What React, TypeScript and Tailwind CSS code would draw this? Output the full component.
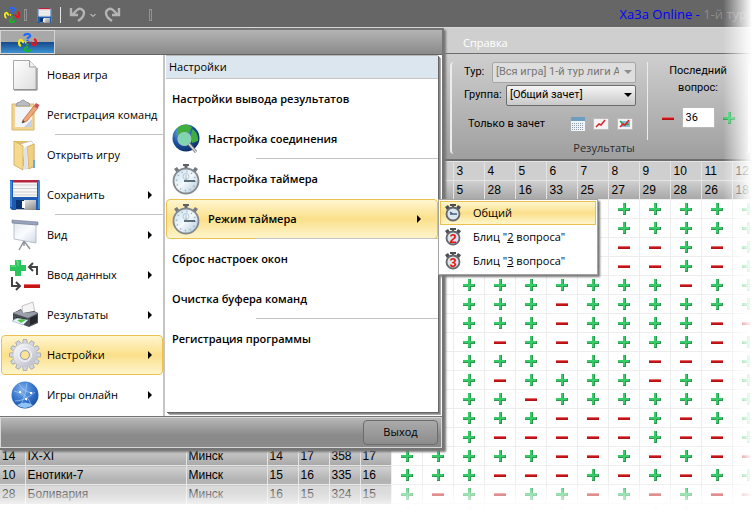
import type { ReactNode } from 'react';

interface MenuEntry {
  label: string;
  icon?: ReactNode;
  arrow?: boolean;
  active?: boolean;
  line?: boolean;
}

interface TeamRow {
  info?: string[];
  marks: string;
}

const ROWS: TeamRow[] = [
  { marks: '++++++++++++' },
  { marks: '++++++++++++' },
  { marks: '+++++++--+-+' },
  { marks: '+++++++--+-+' },
  { marks: '+++++++++-++' },
  { marks: '+++++-++++++' },
  { marks: '+++++-++++--' },
  { marks: '+++-+-++++-+' },
  { marks: '+++++-++---+' },
  { marks: '+++-++++-+-+' },
  { marks: '++++-+++++++' },
  { marks: '+++++---+-++' },
  { marks: '+++-----+--+' },
  { info: ['14', 'IX-XI', 'Минск', '14', '17', '358', '17'], marks: '+++++--+-+--' },
  { info: ['10', 'Енотики-7', 'Минск', '15', '16', '335', '16'], marks: '+++---+-+-++' },
  { info: ['28', 'Боливария', 'Минск', '16', '15', '324', '15'], marks: '+-+-++-+-+--' },
  { marks: '+-+-++--++-+' },
];

const HEADERS = [
  ['1', '2', '3', '4', '5', '6', '7', '8', '9', '10', '11', '12'],
  ['2', '3', '5', '28', '16', '33', '25', '27', '29', '28', '26', '18'],
];

function LogoIcon({ size }: { size: number }) {
  return (
    <svg width={size} height={size} viewBox="0 0 20 20" fill="none" strokeWidth="2.3" className="shrink-0">
      <path d="M6.600 3.200C6.800.4 12.800.4 12.900 3C12.900 4.800 10.200 4.200 10.100 6.200M10.100 7.200v1.600" stroke="#1f6bff" />
      <path d="M16.800 6.600C19.600 6.800 19.600 12.800 17 12.900C15.200 12.900 15.800 10.200 13.800 10.100M12.800 10.100h-1.600" stroke="#ee1111" />
      <path d="M13.400 16.800C13.200 19.600 7.200 19.600 7.100 17C7.100 15.200 9.800 15.800 9.900 13.800M9.900 12.800v-1.600" stroke="#18b52a" />
      <path d="M3.200 13.400C.4 13.200.4 7.200 3 7.100C4.800 7.100 4.200 9.800 6.200 9.900M7.200 9.900h1.600" stroke="#f5ea14" />
    </svg>
  );
}

function Floppy({ size }: { size: number }) {
  return (
    <svg width={size} height={size} viewBox="0 0 30 30" className="shrink-0">
      <defs>
        <linearGradient id="shutter" x1="0" x2="1" y1="0" y2="1">
          <stop offset="0" stopColor="#fff" />
          <stop offset="1" stopColor="#888" />
        </linearGradient>
      </defs>
      <path d="M0 0h29l1 1v29H2l-2-2z" fill="#1d5cb0" />
      <path d="M0 1h2v26H0zM28 1h2v28h-2z" fill="#3c8ae0" />
      <path d="M3 0h24v17H3z" fill="#f6f6f6" />
      <path d="M3 0h24v2.500H3z" fill="#b8243c" />
      <path d="M3 5h24M3 8.500h24M3 12h24M3 15h24" stroke="#cfcfcf" />
      <path d="M6 20h20v10H6z" fill="url(#shutter)" />
      <path d="M6 20h8v9H6z" fill="#0c3474" />
      <path d="M12 21h3v7h-3z" fill="#fff" />
    </svg>
  );
}

function PageIcon() {
  return (
    <svg width="26" height="32" viewBox="0 0 26 32">
      <defs>
        <linearGradient id="page" x1="0" x2="1" y1="0" y2="1">
          <stop offset="0" stopColor="#fff" />
          <stop offset="1" stopColor="#dedede" />
        </linearGradient>
      </defs>
      <path d="M1.500 1.500h16l6.500 6.500v22.500H1.500z" fill="url(#page)" stroke="#a9a9a9" />
      <path d="M17.500 1.500v6.500H24" fill="#eee" stroke="#a0a0a0" />
      <path d="M2 31h23V9" fill="none" stroke="#777" />
    </svg>
  );
}

function ClipboardIcon() {
  return (
    <svg width="30" height="32" viewBox="0 0 30 32">
      <path d="M2 5h22v26H2z" fill="#f0d592" stroke="#d9b56c" />
      <path d="M5 8h17v20H5z" fill="#f2f6fb" />
      <path d="M22 20v8h-8z" fill="#c4d2e4" />
      <path d="M6 7q0-4 4-4q3-4 6 0q4 0 4 4z" fill="#b9bdc2" stroke="#9a9ea4" />
      <path d="M13 21L24 7l3.500 2.500L17 22l-5 2z" fill="#f0a878" stroke="#b86c44" strokeWidth=".8" />
      <path d="M24 7l2-3 3.500 2-2 3.500z" fill="#c8545c" />
      <path d="M12 24l1-3 2 2z" fill="#444" />
    </svg>
  );
}

function FoldersIcon() {
  return (
    <svg width="26" height="32" viewBox="0 0 26 32">
      <path d="M3 2h14v25H3z" fill="#e5bd62" />
      <path d="M8 5l11-3 3 3v23l-8 2z" fill="#fff" stroke="#b5b5b5" strokeWidth=".7" />
      <path d="M2 2l9 5v24l-9-5z" fill="#f5da8e" stroke="#d6b469" />
      <path d="M15 8l7-3v22l-5 3z" fill="#f0cf7e" stroke="#d6b469" />
      <path d="M12 9l3-2 1 22-4 2z" fill="#dfe3e8" />
      <path d="M21 21h2v8h-2z" fill="#68a8e8" />
    </svg>
  );
}

function BoardIcon() {
  return (
    <svg width="30" height="32" viewBox="0 0 30 32">
      <defs>
        <linearGradient id="board" x1="0" x2="1" y1="0" y2="1">
          <stop offset="0" stopColor="#e4e9ee" />
          <stop offset=".5" stopColor="#fafcff" />
          <stop offset="1" stopColor="#cfd9e3" />
        </linearGradient>
      </defs>
      <path d="M14 22l-5 9M14 22l6 8M14 20v7" stroke="#8d929b" strokeWidth="1.400" />
      <path d="M4 4l22 2v18L4 20z" fill="url(#board)" stroke="#aab3bd" strokeWidth=".8" />
      <path d="M2 1l26 2v3L2 4z" fill="#99a4bb" stroke="#707c98" strokeWidth=".6" />
    </svg>
  );
}

function InputIcon() {
  return (
    <svg width="32" height="32" viewBox="0 0 32 32" fill="none">
      <path d="M6 1h6v5h5v6h-5v5H6v-5H1V6h5z" fill="#2cc45c" />
      <path d="M7 2h2v5M2 7h5" stroke="#7be49a" />
      <path d="M28 16V8h-7M24 4l-4 4 4 4" stroke="#444" strokeWidth="2" />
      <path d="M3 18v9h8M7 23l4 4-4 4" stroke="#444" strokeWidth="2" />
      <path d="M15 25h16v4H15z" fill="#c41414" />
      <path d="M15 25.500h16" stroke="#ee6a6a" />
    </svg>
  );
}

function PrinterIcon() {
  return (
    <svg width="28" height="28" viewBox="0 0 28 28">
      <path d="M11 5l11-4 2 11-12 3z" fill="#f5f5f5" stroke="#b4b4b4" strokeWidth=".8" />
      <path d="M2 12l8-4 2 4 11-2 4 2v10l-9 4L2 20z" fill="#4a4f57" />
      <path d="M2 12l8-3 2 3 11-1 4 1-10 5z" fill="#9aa0aa" />
      <path d="M5 16l11 2v3L5 19z" fill="#111" />
      <path d="M1 20l5-3 11 2-5 5z" fill="#e6f4fa" stroke="#8cabba" strokeWidth=".5" />
      <path d="M6 19l6-1 3 1-5 3z" fill="#56c450" />
      <path d="M19 17l7-3v7l-7 3z" fill="#24272c" />
    </svg>
  );
}

const TEETH = [0, 30, 60, 90, 120, 150, 180, 210, 240, 270, 300, 330];

function GearIcon() {
  return (
    <svg width="32" height="34" viewBox="-16 -17 32 34">
      <defs>
        <linearGradient id="gear" x1="0" x2="1" y1="0" y2="1">
          <stop offset="0" stopColor="#fff" />
          <stop offset="1" stopColor="#b4b8c6" />
        </linearGradient>
      </defs>
      {TEETH.map((angle) => (
        <path key={angle} d="M-2.500-11L-1.800-15.500H1.800L2.500-11z" fill="#d2d5de" stroke="#8c92a4" strokeWidth=".6" transform={`rotate(${angle})`} />
      ))}
      <circle r="12" fill="url(#gear)" stroke="#c4c8d2" strokeWidth=".7" />
      <circle r="6.500" fill="#dfe2ea" stroke="#f3f5fa" />
      <circle r="4.500" fill="#fae394" stroke="#969cae" />
    </svg>
  );
}

function GlobeIcon() {
  return (
    <svg width="28" height="28" viewBox="0 0 28 28" fill="none">
      <defs>
        <radialGradient id="globe" cx=".4" cy=".3" r=".8">
          <stop offset="0" stopColor="#7fb2ee" />
          <stop offset=".6" stopColor="#2c6cc6" />
          <stop offset="1" stopColor="#1a4494" />
        </radialGradient>
      </defs>
      <circle cx="14" cy="14" r="13.500" fill="url(#globe)" />
      <path d="M3 10q9 2 13 10M8 3q4 8 14 9M4 20q10 0 20-9M16 2q-1 12-6 22M20 24q-2-8-12-14" stroke="#a9cdf7" strokeWidth=".7" />
      <path d="M6 24q8 6 16 0q-8-5-16 0z" fill="#8fc4f4" />
      <path d="M8 10h2v2H8zM19 11h2v2h-2zM14 17h2v2h-2z" fill="#fff" />
    </svg>
  );
}

function EarthSearchIcon() {
  return (
    <svg width="28" height="32" viewBox="0 0 28 32">
      <defs>
        <radialGradient id="earth" cx=".35" cy=".3" r=".8">
          <stop offset="0" stopColor="#7fbcf0" />
          <stop offset=".5" stopColor="#1c56a8" />
          <stop offset="1" stopColor="#082458" />
        </radialGradient>
      </defs>
      <circle cx="14" cy="15" r="13.500" fill="url(#earth)" />
      <path d="M6 4q8-5 14 0l-3 6-5-1-2 5-5-2zM20 6q7 4 6 12l-6 2-1-8z" fill="#3fae3c" />
      <circle cx="12.500" cy="16" r="6.500" fill="#7fd6ae" stroke="#9fc8b8" strokeWidth="1.200" />
      <path d="M17 21l7 8" stroke="#777" strokeWidth="3" />
      <path d="M17 21l7 8" stroke="#ddd" strokeWidth="1.400" />
    </svg>
  );
}

function StopwatchIcon() {
  return (
    <svg width="28" height="32" viewBox="0 0 28 32">
      <defs>
        <linearGradient id="dial" x1="0" x2="1" y1="0" y2="1">
          <stop offset="0" stopColor="#c4dcec" />
          <stop offset=".5" stopColor="#f4f9fc" />
          <stop offset="1" stopColor="#a8c2d2" />
        </linearGradient>
      </defs>
      <path d="M11 1h6v2h-1.500v3h-3V3H11z" fill="#5c6266" />
      <path d="M2 6l3-2 3 4-3 2zM26 6l-3-2-3 4 3 2z" fill="#747a7e" />
      <circle cx="14" cy="18" r="12.500" fill="url(#dial)" stroke="#828a90" strokeWidth="1.800" />
      <circle cx="14" cy="18" r="9.500" fill="none" stroke="#8aa4b8" strokeDasharray="1 4" strokeWidth="1.500" />
      <circle cx="14" cy="13.500" r="3" fill="none" stroke="#98b4c4" strokeWidth=".7" />
      <path d="M12 18h11" stroke="#2a4254" strokeWidth="1.500" />
      <path d="M14 18v-6" stroke="#7a8c9c" strokeWidth=".6" />
    </svg>
  );
}

function SmallWatch({ digit }: { digit?: string }) {
  return (
    <svg width="16" height="18" viewBox="0 0 16 18">
      <path d="M5 0h6v2H9v3H7V2H5zM0 3l3-2 2 3-3 2zM16 3l-3-2-2 3 3 2z" fill="#4c5054" />
      <circle cx="8" cy="10" r="6.500" fill="#dbe6ee" stroke="#62686c" strokeWidth="1.800" />
      {digit ? (
        <text x="8" y="15" textAnchor="middle" fontFamily="Liberation Sans, sans-serif" fontSize="13" fontWeight="bold" fill="#e81414">
          {digit}
        </text>
      ) : (
        <path d="M5 10h7M5 8l3 2" stroke="#49627a" strokeWidth="1.300" />
      )}
    </svg>
  );
}

function Mark({ kind }: { kind: string }) {
  if (kind === '+') {
    return (
      <svg width="12" height="12" viewBox="0 0 12 12" className="mx-auto block" aria-label="+">
        <path d="M5 0h3v5h4v3H8v4H5V8H0V5h5z" fill="#2f9550" />
        <path d="M5 0h2v5h4v2H7v4H5V7H0V5h5z" fill="#33cc66" />
      </svg>
    );
  }
  return (
    <svg width="12" height="12" viewBox="0 0 12 12" className="mx-auto block" aria-label="-">
      <path d="M0 5h12v3H0z" fill="#b11217" />
      <path d="M0 5h12v1H0z" fill="#e06a6a" />
      <path d="M0 6h11v1H0z" fill="#cc1616" />
    </svg>
  );
}

const MAIN_MENU: MenuEntry[] = [
  { label: 'Новая игра', icon: <PageIcon /> },
  { label: 'Регистрация команд', icon: <ClipboardIcon />, line: true },
  { label: 'Открыть игру', icon: <FoldersIcon /> },
  { label: 'Сохранить', icon: <Floppy size={30} />, arrow: true, line: true },
  { label: 'Вид', icon: <BoardIcon />, arrow: true },
  { label: 'Ввод данных', icon: <InputIcon />, arrow: true },
  { label: 'Результаты', icon: <PrinterIcon />, arrow: true },
  { label: 'Настройки', icon: <GearIcon />, arrow: true, active: true },
  { label: 'Игры онлайн', icon: <GlobeIcon />, arrow: true },
];

const SETTINGS_MENU: MenuEntry[] = [
  { label: 'Настройки вывода результатов' },
  { label: 'Настройка соединения', icon: <EarthSearchIcon />, line: true },
  { label: 'Настройка таймера', icon: <StopwatchIcon /> },
  { label: 'Режим таймера', icon: <StopwatchIcon />, arrow: true, active: true, line: true },
  { label: 'Сброс настроек окон' },
  { label: 'Очистка буфера команд', line: true },
  { label: 'Регистрация программы' },
];

function MenuArrow() {
  return (
    <svg width="4" height="8" viewBox="0 0 4 8" className="ml-auto shrink-0">
      <path d="M0 0l4 4-4 4z" fill="#000" />
    </svg>
  );
}

const HIGHLIGHT = 'border-[#ecc04e] bg-linear-to-b from-[#fff6cf] via-[#fbe08a] to-[#fef5cb]';

function TitleBar() {
  return (
    <header className="flex h-7 items-center border-b border-[#d8d8d8] bg-[#666666] pl-1 pr-2 pt-[3px]">
      <LogoIcon size={16} />
      <span className="ml-1 h-3 w-[3px] border border-[#929292]" />
      <button type="button" aria-label="Сохранить" className="ml-[10px]">
        <Floppy size={15} />
      </button>
      <span className="ml-2 h-4 w-px bg-[#e4e4e4]" />
      <button type="button" aria-label="Отменить" className="ml-2 flex items-center gap-1">
        <svg width="17" height="16" viewBox="0 0 17 16" fill="none" stroke="#b4b4b4" strokeWidth="2.400">
          <path d="M2 1v7h7M3 8L8 3C11 0 15 3 15 6c0 4-3 6-6 8" />
        </svg>
        <svg width="6" height="5" viewBox="0 0 6 5" fill="none" stroke="#e6e6e6">
          <path d="M.5 1L3 3.500L5.500 1" />
        </svg>
      </button>
      <button type="button" aria-label="Повторить" className="ml-2">
        <svg width="17" height="16" viewBox="0 0 17 16" fill="none" stroke="#b4b4b4" strokeWidth="2.400">
          <path d="M15 1v7H8M14 8L9 3C6 0 2 3 2 6c0 4 3 6 6 8" />
        </svg>
      </button>
      <span className="ml-7 h-3 w-[3px] border border-[#929292]" />
      <h1 className="ml-auto whitespace-nowrap text-[13px] text-[#0000ff]">
        Xa3a Online - <span className="text-[#8c8c8c]">1-й тур</span>
      </h1>
    </header>
  );
}

function Caret({ color }: { color: string }) {
  return (
    <svg width="8" height="4" viewBox="0 0 8 4" className="pointer-events-none absolute right-1 top-2">
      <path d="M0 0h8L4 4z" fill={color} />
    </svg>
  );
}

function Ribbon() {
  return (
    <section className="border-b-2 border-[#6e6e6e] bg-[#cfcfcf] font-['Roboto','Liberation_Sans',sans-serif] text-[11px] text-black">
      <nav className="flex h-[26px] items-center border-b border-[#6c6c6c] pl-[463px] pt-[6px]">
        <a href="#help" className="font-['Open_Sans','Noto_Sans',sans-serif] text-[11px] text-white">
          Справка
        </a>
      </nav>
      <div className="flex h-[105px] bg-linear-to-b from-[#cfcfcf] to-[#9f9f9f] pl-[450px] pt-2">
        <div className="flex h-[92px] w-[300px] shrink-0 flex-col rounded-sm border-x-2 border-[#ececec]">
          <div className="flex">
            <div className="flex w-[196px] flex-col gap-[2px] border-r border-[#ececec] pl-3 pr-[11px]">
              <div className="flex items-center justify-between">
                <label htmlFor="tour">Тур:</label>
                <div className="relative w-36">
                  <select id="tour" disabled className="h-[21px] w-full appearance-none text-clip rounded-xs border border-[#a6a6a6] bg-[#dedede] pl-[3px] pr-4 text-[#777777] opacity-100">
                    <option>[Вся игра] 1-й тур лиги А</option>
                  </select>
                  <Caret color="#8c8c8c" />
                </div>
              </div>
              <div className="flex items-center justify-between">
                <label htmlFor="group">Группа:</label>
                <div className="relative w-[130px]">
                  <select id="group" className="h-[21px] w-full appearance-none rounded-xs border border-[#6c6c6c] bg-linear-to-b from-[#f5f5f5] to-[#c9c9c9] pl-[3px]">
                    <option>[Общий зачет]</option>
                  </select>
                  <Caret color="#000000" />
                </div>
              </div>
              <div className="flex h-8 items-center pl-1">
                <span className="w-[103px]">Только в зачет</span>
                <div className="flex gap-2">
                  <button type="button" aria-label="Таблица">
                    <svg width="14" height="14" viewBox="0 0 14 14">
                      <path d="M0 0h14v14H0z" fill="#f2f5f8" />
                      <path d="M0 0h14v4H0z" fill="#6c9ec4" />
                      <path d="M1 6.500h12M1 8.500h12M1 10.500h12M1 12.500h12" stroke="#8c9eae" strokeDasharray="1 1" />
                    </svg>
                  </button>
                  <button type="button" aria-label="График">
                    <svg width="16" height="14" viewBox="0 0 16 14" fill="none">
                      <path d="M.5 1.500h15v11H.5z" fill="#f4f4f4" stroke="#bcbcbc" />
                      <path d="M3 10l3-3 2 1 4-5" stroke="#d82424" strokeWidth="1.500" />
                    </svg>
                  </button>
                  <button type="button" aria-label="Сравнение">
                    <svg width="16" height="14" viewBox="0 0 16 14" fill="none">
                      <path d="M.5 1.500h15v11H.5z" fill="#f4f4f4" stroke="#bcbcbc" />
                      <path d="M4 4h9v6H4z" fill="#8db8dc" />
                      <path d="M3 4l4 4 5-1" stroke="#28a048" strokeWidth="1.500" />
                      <path d="M3 10l3-3 2 1 4-5" stroke="#d82424" strokeWidth="1.500" />
                    </svg>
                  </button>
                </div>
              </div>
            </div>
            <div className="flex flex-1 flex-col items-center">
              <label htmlFor="question" className="text-center leading-[17px]">
                Последний
                <br />
                вопрос:
              </label>
              <div className="mt-[11px] flex items-center gap-2">
                <button type="button" aria-label="Предыдущий">
                  <Mark kind="-" />
                </button>
                <input id="question" defaultValue="36" className="h-[21px] w-[33px] border border-[#b8b8b8] bg-white pl-[3px]" />
                <button type="button" aria-label="Следующий">
                  <Mark kind="+" />
                </button>
              </div>
            </div>
          </div>
          <div className="pl-2 text-center font-['Open_Sans','Noto_Sans',sans-serif] text-[#2c2c2c]">Результаты</div>
        </div>
      </div>
    </section>
  );
}

function ResultsTable() {
  return (
    <table className="w-[763px] table-fixed border-collapse bg-white font-['Liberation_Sans',Arial,sans-serif] text-xs text-black">
      <colgroup>
        <col className="w-[25px]" />
        <col className="w-[161px]" />
        <col className="w-[81px]" />
        {Array.from({ length: 16 }, (_, i) => (
          <col key={i} className="w-[31px]" />
        ))}
      </colgroup>
      <thead>
        {HEADERS.map((cells, r) => (
          <tr
            key={r}
            className={r === 0 ? 'h-[19px] bg-[#cfcfcf]' : 'h-[19px] bg-linear-to-b from-[#cfcfcf] to-[#a6a6a6]'}
          >
            <th colSpan={7} />
            {cells.map((n, i) => (
              <th key={i} scope="col" className="border-l border-t border-[#e4e4e4] p-0 pl-[3px] text-left font-normal leading-4">
                {n}
              </th>
            ))}
          </tr>
        ))}
      </thead>
      <tbody>
        {ROWS.map((row, r) => (
          <tr key={r} className="h-[19px]">
            {row.info ? (
              row.info.map((text, i) => (
                <td
                  key={i}
                  className="border-l border-t border-[#e4e4e4] bg-linear-to-b from-[#d2d2d2] to-[#a8a8a8] p-0 pl-[2px] leading-4 first:border-l-0"
                >
                  {text}
                </td>
              ))
            ) : (
              <td colSpan={7} className="p-0" />
            )}
            {row.marks.split('').map((kind, i) => (
              <td key={i} className="border-l border-t border-[#ededed] p-0">
                <Mark kind={kind} />
              </td>
            ))}
          </tr>
        ))}
      </tbody>
    </table>
  );
}

function MainMenu() {
  return (
    <ul className="w-[165px] border-r-2 border-[#c4c4c4] bg-white pb-px pl-px">
      {MAIN_MENU.map((item) => (
        <li key={item.label} className="relative h-10">
          <button
            type="button"
            className={`flex h-10 w-full items-center rounded-sm border pl-[7px] pr-[10px] text-left ${item.active ? HIGHLIGHT : 'border-transparent'}`}
          >
            <span className="flex w-8 shrink-0 justify-center">{item.icon}</span>
            <span className="ml-[6px] whitespace-nowrap">{item.label}</span>
            {item.arrow && <MenuArrow />}
          </button>
          {item.line && <span className="absolute bottom-0 left-[54px] right-0 h-px bg-[#c4c4c4]" />}
        </li>
      ))}
    </ul>
  );
}

function SettingsMenu() {
  return (
    <div className="mb-1 ml-px mr-1 flex-1 border-t border-[#b8b8b8] bg-white shadow-[1px_1px_0_#666,2px_2px_0_#888,3px_3px_0_#aaa]">
      <h2 className="h-[23px] border-b border-[#c4c4c4] bg-[#dce6ee] pl-[3px] leading-[22px]">Настройки</h2>
      <ul>
        {SETTINGS_MENU.map((item) => (
          <li key={item.label} className="relative h-10">
            <button
              type="button"
              className={`flex h-10 w-full items-center rounded-sm border pl-[5px] pr-4 text-left font-semibold ${item.active ? HIGHLIGHT : 'border-transparent'}`}
            >
              {item.icon && <span className="mr-2 w-7 shrink-0">{item.icon}</span>}
              <span className="whitespace-nowrap">{item.label}</span>
              {item.arrow && <MenuArrow />}
            </button>
            {item.line && <span className="absolute bottom-0 left-[90px] right-0 h-px bg-[#c4c4c4]" />}
          </li>
        ))}
      </ul>
    </div>
  );
}

function TimerSubmenu() {
  return (
    <ul className="absolute left-[438px] top-[171px] w-[160px] border border-[#a4a4a4] bg-white p-px shadow-[2px_2px_2px_#777]">
      <li>
        <button type="button" className={`flex h-6 w-full items-center border pl-1 text-left ${HIGHLIGHT}`}>
          <SmallWatch />
          <span className="ml-3">Общий</span>
        </button>
      </li>
      <li>
        <button type="button" className="flex h-6 w-full items-center border border-transparent pl-1 text-left">
          <SmallWatch digit="2" />
          <span className="ml-3">
            Блиц "<u>2</u> вопроса"
          </span>
        </button>
      </li>
      <li>
        <button type="button" className="flex h-6 w-full items-center border border-transparent pl-1 text-left">
          <SmallWatch digit="3" />
          <span className="ml-3">
            Блиц "<u>3</u> вопроса"
          </span>
        </button>
      </li>
    </ul>
  );
}

function ApplicationMenu() {
  return (
    <div className="absolute left-0 top-7 z-10 text-[11px] text-black">
      <div className="w-[444px] border-2 border-l-0 border-[#757575] bg-[#dadada] shadow-[2px_2px_2px_#777]">
        <div className="flex h-[25px] border-b border-[#656565] bg-linear-to-b from-[#b4b4b4] to-[#8a8a8a]">
          <button
            type="button"
            aria-label="Меню"
            className="flex w-[55px] items-center justify-center border border-[#d4d4d4] bg-linear-to-b from-[#a8a8a8] from-50% via-[#184a8c] via-50% to-[#3c92d2]"
          >
            <LogoIcon size={19} />
          </button>
        </div>
        <div className="flex border-b border-[#757575] bg-white">
          <MainMenu />
          <SettingsMenu />
        </div>
        <div className="flex h-[31px] items-center justify-end border border-[#d8d8d8] bg-linear-to-b from-[#b8b8b8] to-[#8a8a8a] to-60% pr-[3px]">
          <button type="button" className="h-[25px] w-[75px] rounded-sm border border-[#6c6c6c] bg-linear-to-b from-[#aaaaaa] to-[#8c8c8c]">
            Выход
          </button>
        </div>
      </div>
      <TimerSubmenu />
    </div>
  );
}

export default function App() {
  return (
    <main className="relative h-screen w-full overflow-hidden bg-white font-['Open_Sans','Noto_Sans',sans-serif]">
      <TitleBar />
      <Ribbon />
      <ResultsTable />
      <ApplicationMenu />
      <div className="pointer-events-none absolute inset-y-0 right-0 z-20 w-8 bg-linear-to-r from-transparent to-white to-90%" />
      <div className="pointer-events-none absolute inset-x-0 bottom-0 z-20 h-8 bg-linear-to-b from-transparent to-white to-90%" />
    </main>
  );
}
